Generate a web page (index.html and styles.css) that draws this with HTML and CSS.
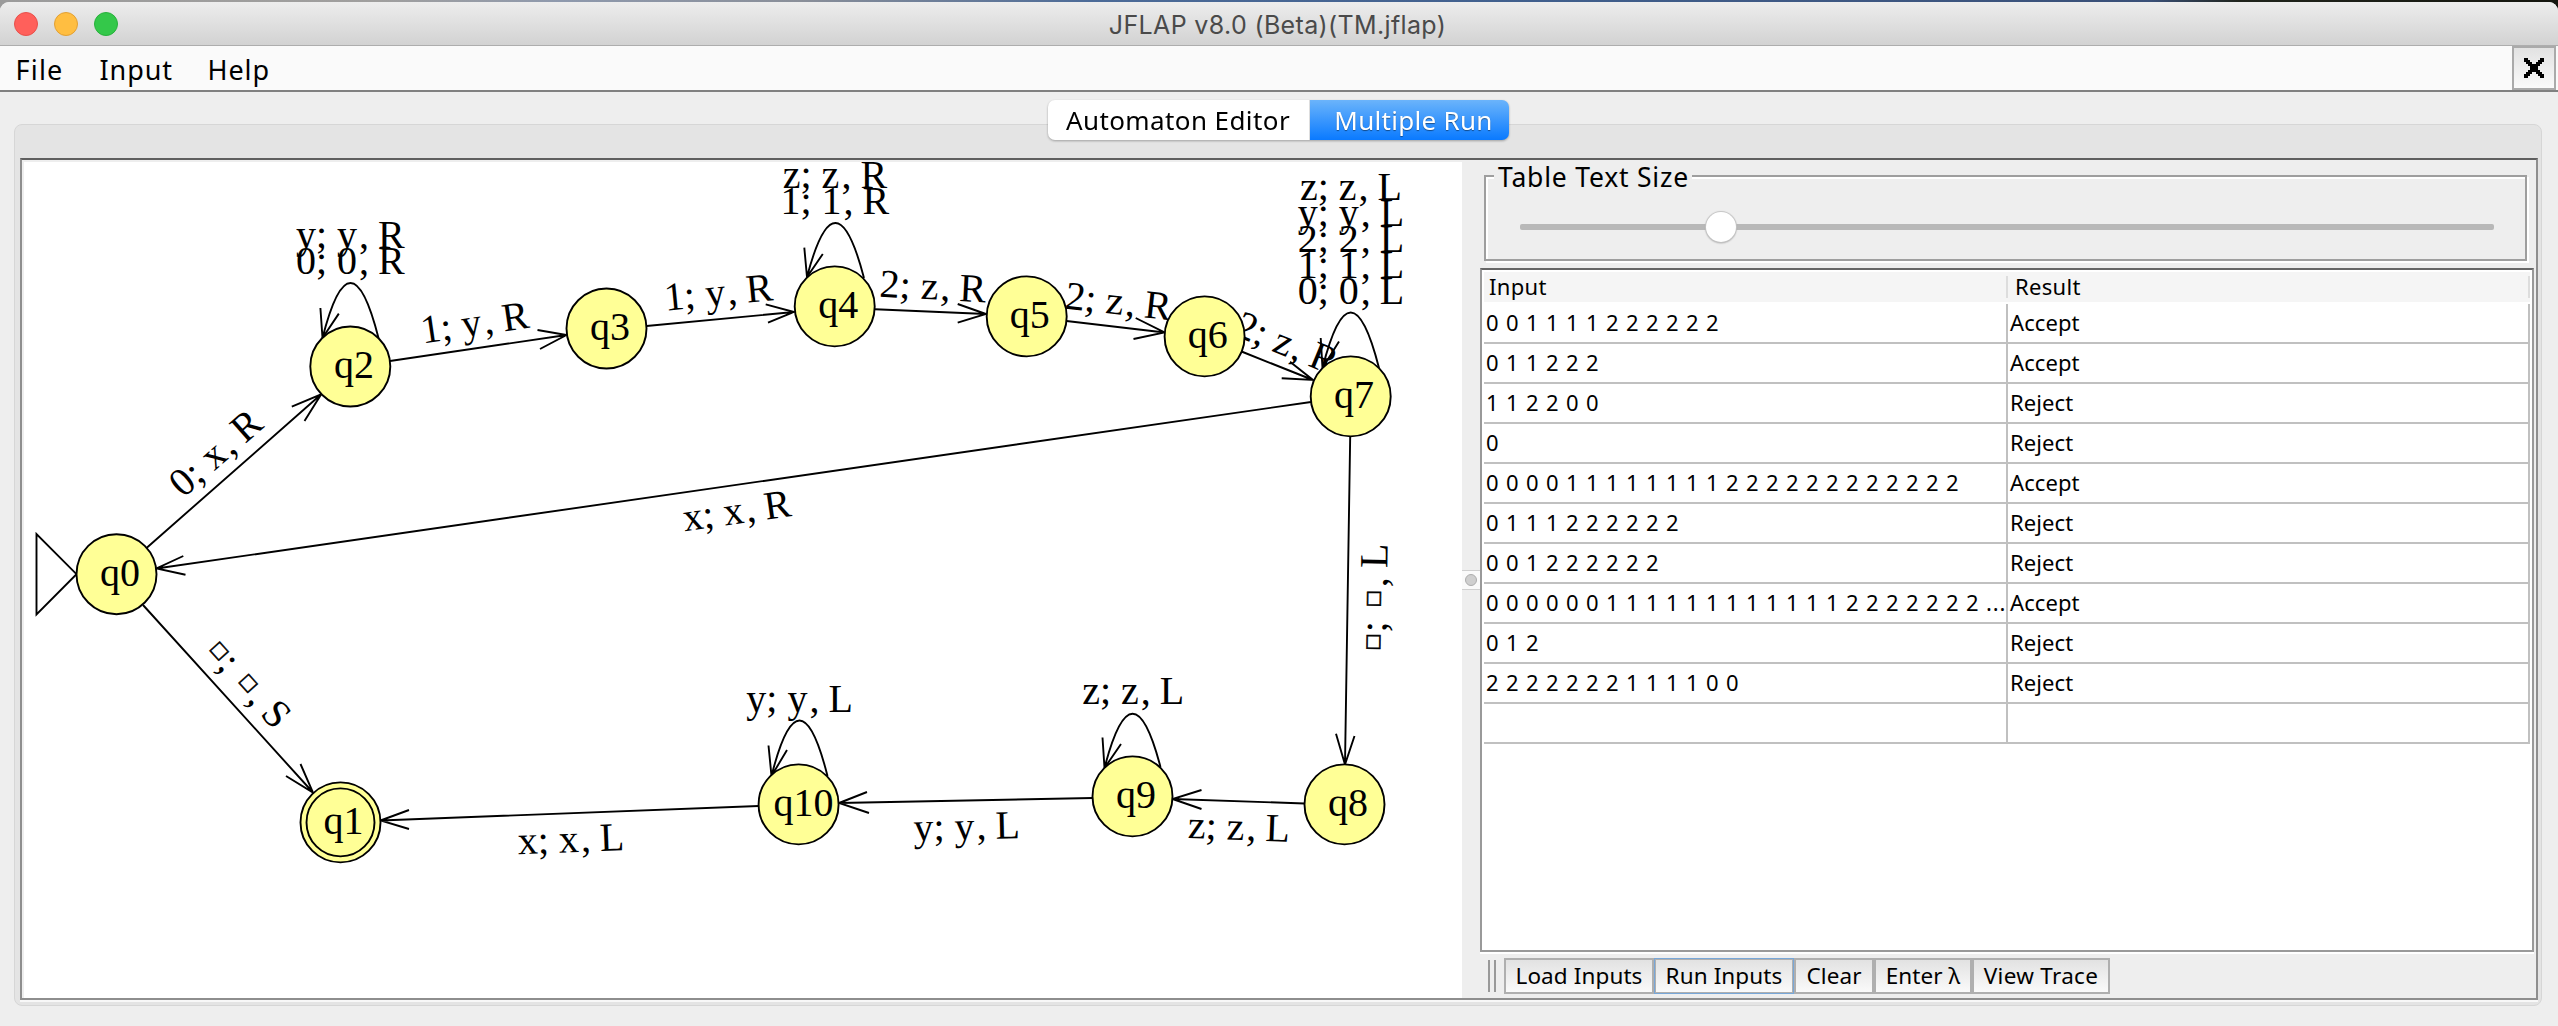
FILE: index.html
```html
<!DOCTYPE html>
<html lang="en">
<head>
<meta charset="utf-8">
<title>JFLAP v8.0 (Beta)(TM.jflap)</title>
<link rel="stylesheet" href="styles.css">
</head>
<body>
<div class="window">
  <header class="titlebar">
    <div class="lights"><i class="light red"></i><i class="light yellow"></i><i class="light green"></i></div>
    <span class="title">JFLAP v8.0 (Beta)(TM.jflap)</span>
  </header>
  <nav class="menubar">
    <span class="menu file">File</span><span class="menu input">Input</span><span class="menu help">Help</span>
    <button class="close" aria-label="Close tab">
      <svg width="20" height="20" viewBox="0 0 10 10" shape-rendering="crispEdges"><path d="M0 0h2v1h1v1h1v1h2v-1h1v-1h1v-1h2v2h-1v1h-1v1h-1v2h1v1h1v1h1v2h-2v-1h-1v-1h-1v-1h-2v1h-1v1h-1v1h-2v-2h1v-1h1v-1h1v-2h-1v-1h-1v-1h-1z"/></svg>
    </button>
  </nav>
  <main class="body">
    <div class="tabs">
      <span class="tab tab-editor">Automaton Editor</span><span class="tab tab-run">Multiple Run</span>
    </div>
    <section class="pane">
      <div class="split">
        <div class="canvas">
          <svg class="automaton" width="1438" height="836" viewBox="24 162 1438 836">
            <g class="edges">
              <path d="M146.5 548L321.2 394.3M291.8 406.7L321.2 394.3L304.5 421"/>
              <path d="M390 361L566.5 335M537.5 330L566.5 335L540 349"/>
              <path d="M646.5 326L794 312M765.7 304.3L794 312L768 322.7"/>
              <path d="M875 309.3L986 314M957.7 304L986 314L957.7 322.7"/>
              <path d="M1066.5 321L1164.6 332.5M1135.7 318L1164.6 332.5L1133.5 339"/>
              <path d="M1241.5 351.5L1313 380M1290 361.7L1313 380L1281.7 378.3"/>
              <path d="M1311 402L156.5 568.5M183.3 556L156.5 568.5L185.5 574.7"/>
              <path d="M1350.2 436L1345 764.5M1336 733.7L1345 764.5L1354.5 736"/>
              <path d="M1304.5 803.5L1172.5 799M1201.5 790L1172.5 799L1201.5 809"/>
              <path d="M1092.5 798L839 803M867 792L839 803L869 813"/>
              <path d="M758.5 806L380.5 820.5M409 810L380.5 820.5L409 829"/>
              <path d="M143 605L313 792.5M300.5 764L313 792.5L286 776"/>
              <path d="M378.5 338Q350.5 228 322.5 338M320.4 308L322.5 338L338.8 313.6"/>
              <path d="M864 278Q835.5 168.5 807 277M804.3 247.7L807 277L822.8 254"/>
              <path d="M1379 368Q1350.7 257 1322.5 368M1320.7 338L1322.5 368L1339 341.5"/>
              <path d="M1160.5 767Q1132.5 660 1104.5 768M1102.5 737.5L1104.5 768L1121 744"/>
              <path d="M827.5 776Q799.5 665 771.5 776M768.5 745.5L771.5 776L787 750"/>
              <path d="M36.5 534V614.5L76.5 574.2Z"/>
            </g>
            <g class="labels">
              <text dx="0 0 0 0 2 -1" transform="translate(224.2 462.5) rotate(-41.3)">0; x, R</text>
              <text dx="0 0 0 0 2 -1" transform="translate(476.5 335.6) rotate(-8.4)">1; y, R</text>
              <text dx="0 0 0 0 2 -1" transform="translate(719.6 305.4) rotate(-5.6)">1; y, R</text>
              <text dx="0 0 0 0 2 -1" transform="translate(932.3 299.5) rotate(3)">2; z, R</text>
              <text dx="0 0 0 0 2 -1" transform="translate(1116.9 314.4) rotate(6.4)">2; z, R</text>
              <text dx="0 0 0 0 2 -1" transform="translate(1282.1 355.2) rotate(22.3)">2; z, R</text>
              <text dx="0 0 0 0 2 -1" transform="translate(738.5 523.6) rotate(-8.2)">x; x, R</text>
              <text dx="0 0 0 0 2 -1" transform="translate(571.4 852.2) rotate(-2.3)">x; x, L</text>
              <text dx="0 0 0 0 2 -1" transform="translate(967 839.5) rotate(-1.4)">y; y, L</text>
              <text dx="0 0 0 0 2 -1" transform="translate(1238.5 840) rotate(2.2)">z; z, L</text>
              <text dx="0 0 0 0 2 -1" x="350.3" y="248">y; y, R</text>
              <text dx="0 0 0 0 2 -1" x="350.3" y="274">0; 0, R</text>
              <text dx="0 0 0 0 2 -1" x="834.9" y="187.8">z; z, R</text>
              <text dx="0 0 0 0 2 -1" x="834.9" y="214">1; 1, R</text>
              <text dx="0 0 0 0 2 -1" x="1351" y="199.7">z; z, L</text>
              <text dx="0 0 0 0 2 -1" x="1351" y="225.7">y; y, L</text>
              <text dx="0 0 0 0 2 -1" x="1351" y="251.7">2; 2, L</text>
              <text dx="0 0 0 0 2 -1" x="1351" y="277.7">1; 1, L</text>
              <text dx="0 0 0 0 2 -1" x="1351" y="303.7">0; 0, L</text>
              <text dx="0 0 0 0 2 -1" x="799.6" y="712">y; y, L</text>
              <text dx="0 0 0 0 2 -1" x="1133.2" y="704">z; z, L</text>
              <g class="blank-label" transform="translate(237.4 690.3) rotate(47.9)">
                <text><tspan class="blank" x="-49.7" y="-8">□</tspan><tspan x="-31.7" y="0">;</tspan><tspan class="blank" x="-6.4" y="-8">□</tspan><tspan x="11.6" y="0" dx="2 -1">, S</tspan></text>
              </g>
              <g class="blank-label" transform="translate(1386.7 599.8) rotate(-89.1)">
                <text><tspan class="blank" x="-50.8" y="-8">□</tspan><tspan x="-32.8" y="0">;</tspan><tspan class="blank" x="-7.5" y="-8">□</tspan><tspan x="10.5" y="0" dx="2 -1">, L</tspan></text>
              </g>
            </g>
            <g class="states">
              <circle cx="116.5" cy="574.2" r="40"/><circle cx="340.5" cy="822.4" r="40"/><circle cx="340.5" cy="822.4" r="34"/>
              <circle cx="350.3" cy="366.5" r="40"/><circle cx="606.5" cy="328.5" r="40"/><circle cx="834.7" cy="306.4" r="40"/>
              <circle cx="1026.7" cy="316.4" r="40"/><circle cx="1204.6" cy="336.4" r="40"/><circle cx="1350.7" cy="396.4" r="40"/>
              <circle cx="1344.5" cy="804.4" r="40"/><circle cx="1132.5" cy="796.4" r="40"/><circle cx="798.6" cy="804.4" r="40"/>
            </g>
            <g class="labels">
              <text x="120" y="586">q0</text><text x="343.5" y="834">q1</text><text x="354" y="378">q2</text>
              <text x="610" y="340">q3</text><text x="838.3" y="318">q4</text><text x="1029.8" y="328">q5</text>
              <text x="1207.7" y="348">q6</text><text x="1354" y="408">q7</text><text x="1348" y="816">q8</text>
              <text x="1136" y="808">q9</text><text x="803.5" y="816">q10</text>
            </g>
          </svg>
        </div>
        <div class="divider"><div class="knob"><i></i></div></div>
        <div class="side">
          <div class="sizer">
            <span class="sizer-title">Table Text Size</span>
            <div class="track"><i class="thumb"></i></div>
          </div>
          <div class="results">
            <div class="head"><span>Input</span><span>Result</span></div>
            <div class="row"><span>0 0 1 1 1 1 2 2 2 2 2 2</span><span>Accept</span></div>
            <div class="row"><span>0 1 1 2 2 2</span><span>Accept</span></div>
            <div class="row"><span>1 1 2 2 0 0</span><span>Reject</span></div>
            <div class="row"><span>0</span><span>Reject</span></div>
            <div class="row"><span>0 0 0 0 1 1 1 1 1 1 1 1 2 2 2 2 2 2 2 2 2 2 2 2</span><span>Accept</span></div>
            <div class="row"><span>0 1 1 1 2 2 2 2 2 2</span><span>Reject</span></div>
            <div class="row"><span>0 0 1 2 2 2 2 2 2</span><span>Reject</span></div>
            <div class="row"><span>0 0 0 0 0 0 1 1 1 1 1 1 1 1 1 1 1 1 2 2 2 2 2 2 2 ...</span><span>Accept</span></div>
            <div class="row"><span>0 1 2</span><span>Reject</span></div>
            <div class="row"><span>2 2 2 2 2 2 2 1 1 1 1 0 0</span><span>Reject</span></div>
            <div class="row"><span></span><span></span></div>
          </div>
          <div class="toolbar">
            <i class="grip"></i>
            <button class="load">Load Inputs</button><button class="run">Run Inputs</button><button class="clear">Clear</button><button class="lambda">Enter λ</button><button class="trace">View Trace</button>
          </div>
        </div>
      </div>
    </section>
  </main>
</div>
</body>
</html>
```
FILE: styles.css
```css
* { box-sizing: border-box; }
body {
  margin: 0;
  width: 2558px;
  height: 1026px;
  overflow: hidden;
  padding-top: 2px;
  background: linear-gradient(90deg, #9b9b9b 0, #a09f9e 380px, #8e99ad 560px, #8a8f99 800px, #4c6b98 1090px, #41608e 1500px, #3a5078 2150px, #20241c 2240px, #15160f 100%);
  font-family: "Noto Sans", "Open Sans", sans-serif;
  color: #000;
}
button { font: inherit; color: inherit; padding: 0; margin: 0; border-radius: 0; }
.window {
  height: 1024px;
  display: flex;
  flex-direction: column;
  background: #eee;
  border-radius: 9px 9px 0 0;
  overflow: hidden;
}

.titlebar {
  height: 44px;
  display: grid;
  grid-template-columns: 200px 1fr 200px;
  align-items: center;
  background: linear-gradient(#ededed, #d2d2d2);
  border-bottom: 1px solid #adadad;
}
.lights { display: flex; gap: 16px; padding-left: 14px; }
.light { width: 24px; height: 24px; border-radius: 50%; border: 1px solid; }
.red { background: #ff605b; border-color: #e8504b; }
.yellow { background: #ffbe41; border-color: #e2a034; }
.green { background: #34c84a; border-color: #28b13c; }
.title {
  text-align: center;
  font: 25px/42px Inter, sans-serif;
  letter-spacing: 0.35px;
  padding: 2px 3px 0 0;
  color: #4a4a4a;
}

.menubar {
  height: 46px;
  display: flex;
  background: #fafafa;
  border-bottom: 2px solid #808080;
  font-size: 27px;
  line-height: 48px;
}
.menu { letter-spacing: 0.9px; }
.file { width: 84px; margin-left: 15.5px; letter-spacing: 1.2px; }
.input { width: 108px; }
.help { flex: 1; }
.close {
  width: 44px;
  height: 44px;
  margin-right: 2px;
  display: grid;
  place-items: center;
  border: 2px solid #aaa;
  background: linear-gradient(#e2e2e2, #fafafa);
}

.body { display: flex; flex-direction: column; padding: 8px 16px 20px 14px; }
.tabs { display: flex; align-self: center; height: 40px; z-index: 1; filter: drop-shadow(0 1px 1px rgba(0,0,0,.3)); }
.tab { font-size: 26px; line-height: 40px; text-align: center; white-space: nowrap; letter-spacing: 0.4px; }
.tab-editor { width: 262px; background: #fff; border-radius: 7px 0 0 7px; border-right: 1px solid #ddd; }
.tab-run {
  width: 199px;
  padding-left: 9px;
  color: #fff;
  letter-spacing: 0.3px;
  text-shadow: 0 1px 1px rgba(0,0,0,.45);
  background: linear-gradient(#6bb4fb, #0a7aff);
  border-radius: 0 7px 7px 0;
}
.pane {
  height: 882px;
  margin-top: -16px;
  padding: 33px 3px 0 5px;
  background: #e4e4e4;
  border: 1px solid #d6d6d6;
  border-radius: 8px;
}
.split {
  height: 842px;
  display: grid;
  grid-template-columns: 1440px 18px 1fr;
  background: #eee;
  border: 2px solid #8e8e8e;
  border-top-color: #5f5f5f;
  box-shadow: 0 2px 0 #f8f8f8;
}
.canvas { padding: 2px 0 0 2px; }
.automaton { display: block; background: #fff; }
.edges { fill: none; stroke: #000; stroke-width: 1.9; }
.states { fill: #ffff96; stroke: #000; stroke-width: 1.9; }
.labels {
  font-family: "Liberation Serif", serif;
  font-size: 40px;
  font-kerning: none;
  text-anchor: middle;
}
.blank-label { text-anchor: start; }
.blank { font: 18px "DejaVu Sans", sans-serif; stroke: #000; stroke-width: 0.6; }

.divider { display: flex; align-items: center; padding-top: 2px; }
.knob {
  width: 18px;
  height: 20px;
  display: grid;
  place-items: center;
  background: #fafafa;
  border: solid #d0d0d0;
  border-width: 1px 0;
}
.knob i { width: 12px; height: 12px; border-radius: 50%; background: #cfcfcf; border: 1px solid #adadad; }

.side { display: flex; flex-direction: column; padding-right: 2px; }
.sizer {
  position: relative;
  height: 86px;
  margin: 15px 7px 7px 4px;
  padding: 47px 31px 0 34px;
  border: 2px solid #9e9e9e;
  box-shadow: 2px 2px 0 #fff, inset 2px 2px 0 #fff;
}
.sizer-title {
  position: absolute;
  left: 8px;
  top: -14px;
  width: 198px;
  padding-left: 4px;
  background: #eee;
  font-size: 26.5px;
  line-height: 28px;
  letter-spacing: 0.8px;
  white-space: nowrap;
}
.track { height: 6px; background: #b8b8b8; border-radius: 2px; }
.thumb {
  display: block;
  width: 30px;
  height: 30px;
  margin-left: 186px;
  transform: translateY(-12px);
  border-radius: 50%;
  background: #fff;
  box-shadow: 0 0 1px 1px #c4c4c4, 0 1px 2px rgba(0,0,0,.4);
}
.results {
  height: 684px;
  padding: 2px;
  background: #fff;
  border: 2px solid #999;
  border-top-color: #666;
  box-shadow: 0 2px 0 #fff;
  font-size: 22px;
}
.head, .row { display: grid; grid-template-columns: 524px 522px; }
.head { height: 30px; margin-bottom: 2px; background: #f5f5f5; letter-spacing: 0.3px; }
.head span { height: 22px; margin-top: 4px; line-height: 20px; padding-left: 5px; border-right: 2px solid #ddd; }
.head span + span { padding-left: 7px; }
.row { height: 40px; line-height: 36px; }
.row span {
  padding-left: 2px;
  border: solid #c0c0c0;
  border-width: 0 2px 2px 0;
  white-space: nowrap;
  letter-spacing: 0.85px;
}
.row span + span { letter-spacing: 0.1px; }

.toolbar { display: flex; margin-top: 6px; height: 36px; padding-left: 8px; }
.grip { width: 8px; height: 32px; margin: 2px 8px 0 0; border: solid #999; border-width: 0 2px; }
.toolbar button {
  border: 2px solid #afafaf;
  background: linear-gradient(#e2e2e2, #fafafa);
  font-size: 22.5px;
  line-height: 30px;
  letter-spacing: 0.1px;
  white-space: nowrap;
}
.toolbar .load { width: 150px; }
.toolbar .run { width: 140px; outline: 1px solid #78a7d8; outline-offset: -1px; }
.toolbar .clear { width: 80px; }
.toolbar .lambda { width: 98px; }
.toolbar .trace { width: 138px; letter-spacing: 0.3px; }
```
